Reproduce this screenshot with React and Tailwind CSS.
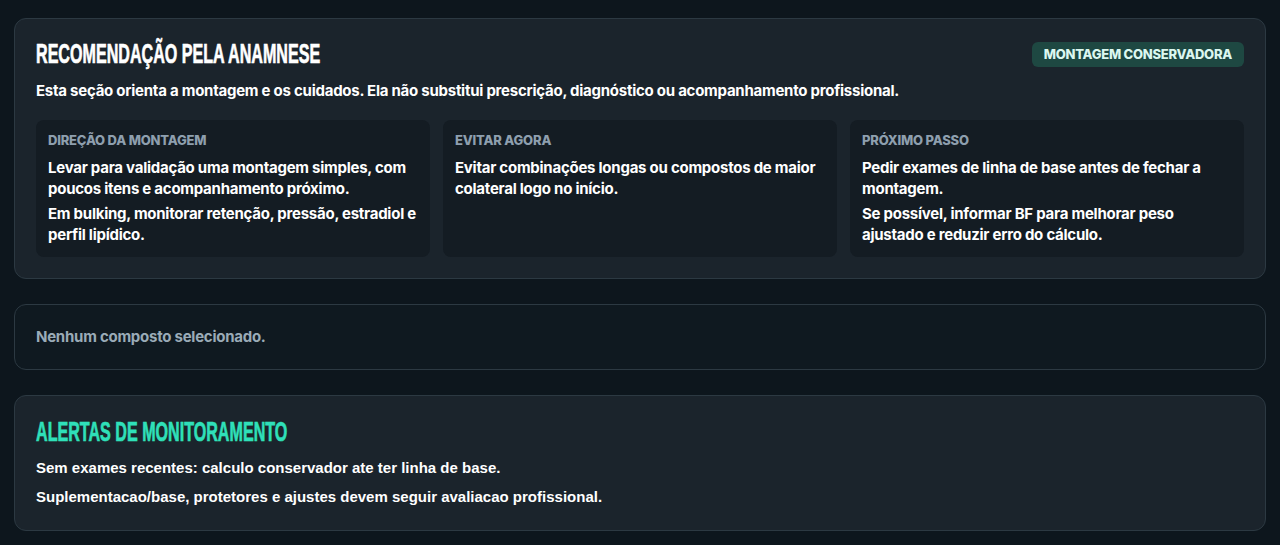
import React from "react";

const SANS = "font-['Inter','Noto_Sans',sans-serif]";
const HEAD = "font-['Liberation_Sans',Arial,sans-serif]";

const columns = [
  {
    label: "Direção da montagem",
    lines: [
      "Levar para validação uma montagem simples, com poucos itens e acompanhamento próximo.",
      "Em bulking, monitorar retenção, pressão, estradiol e perfil lipídico.",
    ],
  },
  {
    label: "Evitar agora",
    lines: ["Evitar combinações longas ou compostos de maior colateral logo no início."],
  },
  {
    label: "Próximo passo",
    lines: [
      "Pedir exames de linha de base antes de fechar a montagem.",
      "Se possível, informar BF para melhorar peso ajustado e reduzir erro do cálculo.",
    ],
  },
];

const alerts = [
  "Sem exames recentes: calculo conservador ate ter linha de base.",
  "Suplementacao/base, protetores e ajustes devem seguir avaliacao profissional.",
];

// condensed display heading (no condensed family installed, so squeeze Liberation Sans)
function Heading({ children, className }) {
  return (
    <h2
      className={`${HEAD} inline-block origin-left scale-x-[0.575] whitespace-nowrap text-[28px] font-bold uppercase leading-8 [-webkit-text-stroke:0.7px_currentColor] ${className}`}
    >
      {children}
    </h2>
  );
}

export default function App() {
  return (
    <div className={`${SANS} min-h-[545px] bg-[#0d161d] px-[14px] pt-[18px] pb-4`}>
      {/* Recomendação */}
      <section className="rounded-xl border border-[#2c3942] bg-[#1b242c] px-[21px] pt-[19px] pb-[21px]">
        <div className="flex items-start justify-between">
          <Heading className="text-white">Recomendação pela anamnese</Heading>
          <span className="mt-[4px] rounded-md bg-[#1e4842] px-3 py-[4px] text-[13px] font-extrabold uppercase leading-[17px] tracking-[-0.25px] text-[#dbf7f0]">
            Montagem conservadora
          </span>
        </div>
        <p className="mt-[11px] text-[15px] font-bold leading-5 tracking-[-0.25px] text-white">
          Esta seção orienta a montagem e os cuidados. Ela não substitui prescrição, diagnóstico ou acompanhamento profissional.
        </p>
        <div className="mt-[19px] grid grid-cols-3 gap-[13px]">
          {columns.map((col) => (
            <div key={col.label} className="rounded-lg bg-[#141c23] px-3 pt-[11px] pb-[12px]">
              <div className="text-[13px] font-extrabold uppercase leading-[18px] tracking-[-0.2px] text-[#8e9fae]">
                {col.label}
              </div>
              <div className="mt-2 flex flex-col gap-[4px]">
                {col.lines.map((line) => (
                  <p key={line} className="text-[15px] font-bold leading-[21px] tracking-[-0.25px] text-white">
                    {line}
                  </p>
                ))}
              </div>
            </div>
          ))}
        </div>
      </section>

      {/* Compostos */}
      <section className="mt-[25px] rounded-xl border border-[#2c3942] bg-[#0f1920] px-[21px] py-[22px]">
        <p className="text-[15px] font-bold leading-5 tracking-[-0.25px] text-[#9aabb7]">Nenhum composto selecionado.</p>
      </section>

      {/* Alertas */}
      <section className="mt-[25px] rounded-xl border border-[#2c3942] bg-[#1b242c] px-[21px] pt-[20px] pb-[23px]">
        <Heading className="text-[#2fe0b9]">Alertas de monitoramento</Heading>
        <div className="mt-[10px] flex flex-col gap-[9px]">
          {alerts.map((a) => (
            <p key={a} className={`${HEAD} text-[15px] font-bold leading-5 text-white`}>
              {a}
            </p>
          ))}
        </div>
      </section>
    </div>
  );
}
